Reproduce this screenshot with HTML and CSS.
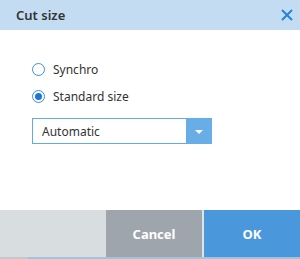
FILE: index.html
```html
<!DOCTYPE html>
<html lang="en">
  <head>
    <meta charset="UTF-8" />
    <title>Cut size</title>
    <link rel="stylesheet" href="styles.css">
  </head>
  <body>
    <div class="dialog">
      <div class="dialog-header">
        <div class="dialog-title">Cut size</div>
        <button class="close-button">
          <svg width="12" height="12" viewBox="0 0 12 12">
            <path d="M1 1 L11 11 M11 1 L1 11" stroke="#2583d9" stroke-width="2" />
          </svg>
        </button>
      </div>

      <div class="dialog-body">
        <label class="radio-row">
          <span class="radio"></span>
          <span class="radio-label">Synchro</span>
        </label>
        <label class="radio-row">
          <span class="radio checked"></span>
          <span class="radio-label">Standard size</span>
        </label>

        <div class="select-box">
          <div class="select-value">Automatic</div>
          <div class="select-arrow"></div>
        </div>
      </div>

      <div class="dialog-footer">
        <div class="footer-spacer"></div>
        <button class="footer-button cancel">Cancel</button>
        <button class="footer-button ok">OK</button>
      </div>
      <div class="bottom-strip">
        <div class="strip-left"></div>
        <div class="strip-right"></div>
      </div>
    </div>
  </body>
</html>
```

FILE: styles.css
```css
body {
  margin: 0;
  padding: 0;
  font-family: "Noto Sans", "Open Sans", Arial, sans-serif;
  background-color: #fff;
}

.dialog {
  width: 300px;
  height: 259px;
  display: flex;
  flex-direction: column;
  background-color: #fff;
}

.dialog-header {
  height: 30px;
  background-color: #c3dcf2;
  display: flex;
  align-items: center;
  justify-content: space-between;
  padding: 0 7px 0 16px;
}

.dialog-title {
  font-size: 13px;
  font-weight: 600;
  color: #333;
}

.close-button {
  border: none;
  background: none;
  padding: 0;
  width: 12px;
  height: 12px;
  display: flex;
}

.dialog-body {
  padding: 29px 0 0 32px;
  display: flex;
  flex-direction: column;
}

.radio-row {
  display: flex;
  align-items: center;
  height: 20px;
  margin-bottom: 7px;
}

.radio-row + .radio-row {
  margin-bottom: 12px;
}

.radio {
  width: 11px;
  height: 11px;
  border: 1.5px solid #3b8fe0;
  border-radius: 50%;
  margin-right: 8px;
  position: relative;
}

.radio.checked::after {
  content: "";
  position: absolute;
  left: 2px;
  top: 2px;
  width: 7px;
  height: 7px;
  border-radius: 50%;
  background-color: #1b78d6;
}

.radio-label {
  font-size: 12px;
  color: #333;
}

.select-box {
  width: 180px;
  height: 26px;
  box-sizing: border-box;
  border: 1px solid #62a9e6;
  display: flex;
}

.select-value {
  flex: 1;
  font-size: 12px;
  color: #333;
  padding-left: 9px;
  display: flex;
  align-items: center;
}

.select-arrow {
  width: 26px;
  margin: -1px -1px -1px 0;
  background-color: #69ade7;
  display: flex;
  align-items: center;
  justify-content: center;
}

.select-arrow::after {
  content: "";
  border-left: 4px solid transparent;
  border-right: 4px solid transparent;
  border-top: 4px solid #fff;
  margin-top: 1px;
}

/* footer buttons */
.dialog-footer {
  margin-top: auto;
  height: 47px;
  display: flex;
}

.footer-spacer {
  width: 106px;
  background-color: #d8dde0;
}

.footer-button {
  border: none;
  font-family: inherit;
  font-size: 13px;
  font-weight: bold;
  color: #fff;
  padding: 0;
}

.cancel {
  width: 98px;
  background-color: #9ea5ad;
  border-right: 2px solid #dfe3e6;
}

.ok {
  flex: 1;
  background-color: #4a97dc;
}

.bottom-strip {
  height: 2px;
  display: flex;
}

.strip-left {
  width: 28px;
  background-color: #c4c8ca;
}

.strip-right {
  flex: 1;
  background-color: #a3c2dc;
}
```
